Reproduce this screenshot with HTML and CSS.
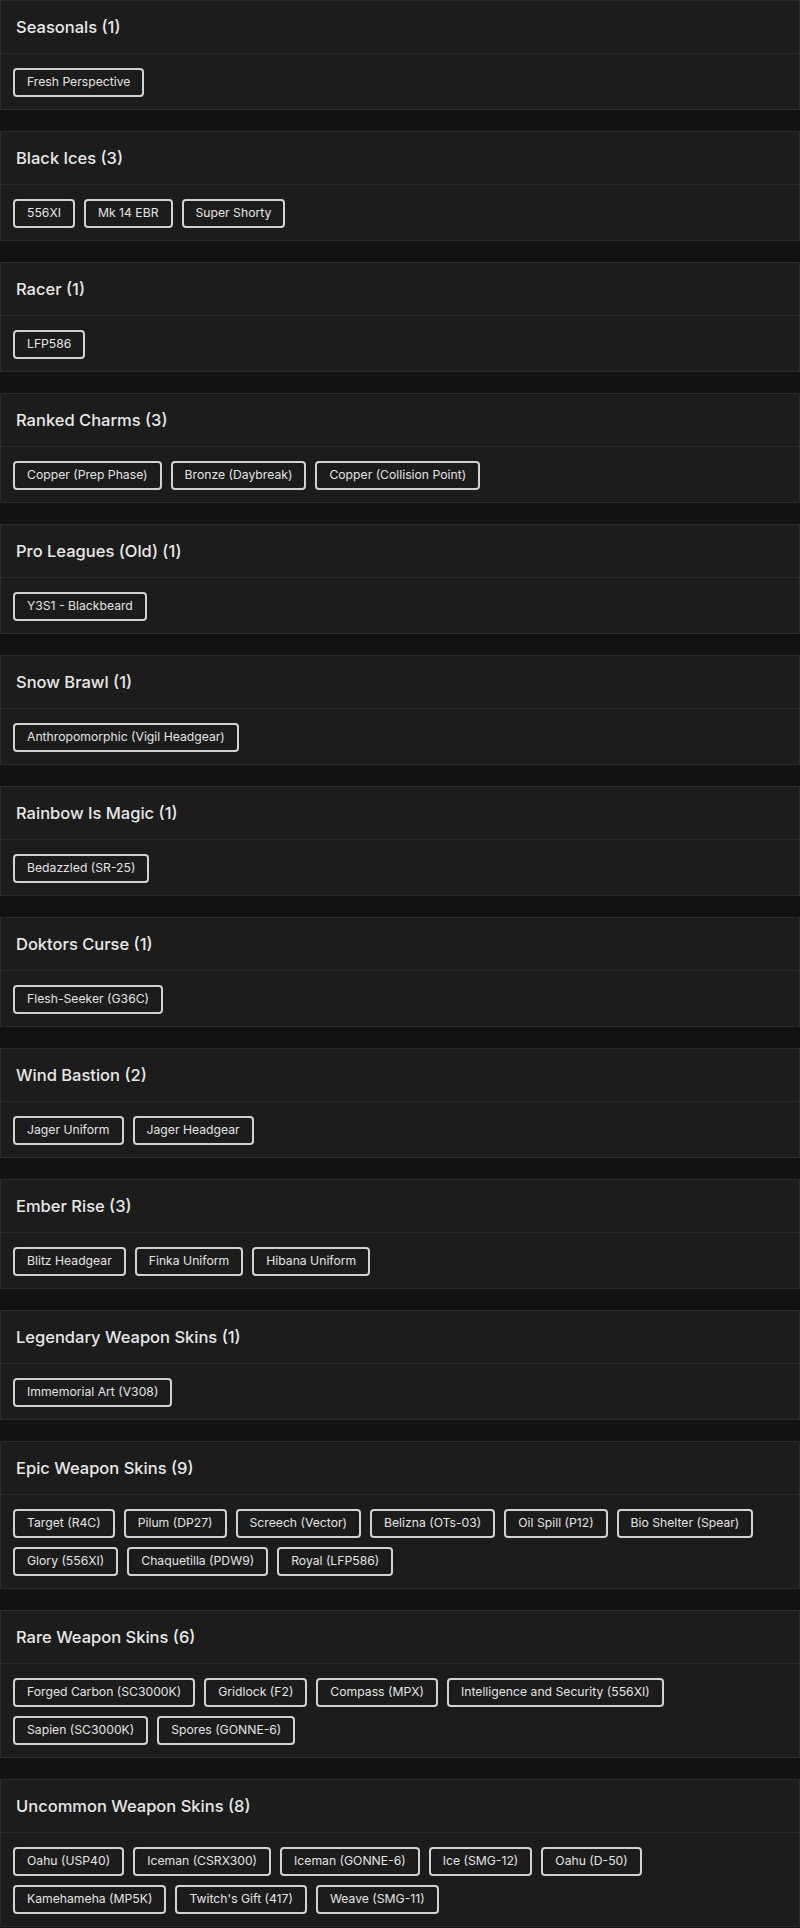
FILE: index.html
```html
<!DOCTYPE html>
<html lang="en">
<head>
<meta charset="utf-8">
<title>Collections</title>
<link rel="stylesheet" href="styles.css">
</head>
<body>
<main class="list">
  <section class="card">
    <div class="card-header"><h3 class="card-title">Seasonals (1)</h3></div>
    <div class="card-body">
      <span class="tag">Fresh Perspective</span>
    </div>
  </section>
  <section class="card">
    <div class="card-header"><h3 class="card-title">Black Ices (3)</h3></div>
    <div class="card-body">
      <span class="tag">556XI</span>
      <span class="tag">Mk 14 EBR</span>
      <span class="tag">Super Shorty</span>
    </div>
  </section>
  <section class="card">
    <div class="card-header"><h3 class="card-title">Racer (1)</h3></div>
    <div class="card-body">
      <span class="tag">LFP586</span>
    </div>
  </section>
  <section class="card">
    <div class="card-header"><h3 class="card-title">Ranked Charms (3)</h3></div>
    <div class="card-body">
      <span class="tag">Copper (Prep Phase)</span>
      <span class="tag">Bronze (Daybreak)</span>
      <span class="tag">Copper (Collision Point)</span>
    </div>
  </section>
  <section class="card">
    <div class="card-header"><h3 class="card-title">Pro Leagues (Old) (1)</h3></div>
    <div class="card-body">
      <span class="tag">Y3S1 - Blackbeard</span>
    </div>
  </section>
  <section class="card">
    <div class="card-header"><h3 class="card-title">Snow Brawl (1)</h3></div>
    <div class="card-body">
      <span class="tag">Anthropomorphic (Vigil Headgear)</span>
    </div>
  </section>
  <section class="card">
    <div class="card-header"><h3 class="card-title">Rainbow Is Magic (1)</h3></div>
    <div class="card-body">
      <span class="tag">Bedazzled (SR-25)</span>
    </div>
  </section>
  <section class="card">
    <div class="card-header"><h3 class="card-title">Doktors Curse (1)</h3></div>
    <div class="card-body">
      <span class="tag">Flesh-Seeker (G36C)</span>
    </div>
  </section>
  <section class="card">
    <div class="card-header"><h3 class="card-title">Wind Bastion (2)</h3></div>
    <div class="card-body">
      <span class="tag">Jager Uniform</span>
      <span class="tag">Jager Headgear</span>
    </div>
  </section>
  <section class="card">
    <div class="card-header"><h3 class="card-title">Ember Rise (3)</h3></div>
    <div class="card-body">
      <span class="tag">Blitz Headgear</span>
      <span class="tag">Finka Uniform</span>
      <span class="tag">Hibana Uniform</span>
    </div>
  </section>
  <section class="card">
    <div class="card-header"><h3 class="card-title">Legendary Weapon Skins (1)</h3></div>
    <div class="card-body">
      <span class="tag">Immemorial Art (V308)</span>
    </div>
  </section>
  <section class="card">
    <div class="card-header"><h3 class="card-title">Epic Weapon Skins (9)</h3></div>
    <div class="card-body">
      <span class="tag">Target (R4C)</span>
      <span class="tag">Pilum (DP27)</span>
      <span class="tag">Screech (Vector)</span>
      <span class="tag">Belizna (OTs-03)</span>
      <span class="tag">Oil Spill (P12)</span>
      <span class="tag">Bio Shelter (Spear)</span>
      <span class="tag">Glory (556XI)</span>
      <span class="tag">Chaquetilla (PDW9)</span>
      <span class="tag">Royal (LFP586)</span>
    </div>
  </section>
  <section class="card">
    <div class="card-header"><h3 class="card-title">Rare Weapon Skins (6)</h3></div>
    <div class="card-body">
      <span class="tag">Forged Carbon (SC3000K)</span>
      <span class="tag">Gridlock (F2)</span>
      <span class="tag">Compass (MPX)</span>
      <span class="tag">Intelligence and Security (556XI)</span>
      <span class="tag">Sapien (SC3000K)</span>
      <span class="tag">Spores (GONNE-6)</span>
    </div>
  </section>
  <section class="card">
    <div class="card-header"><h3 class="card-title">Uncommon Weapon Skins (8)</h3></div>
    <div class="card-body">
      <span class="tag">Oahu (USP40)</span>
      <span class="tag">Iceman (CSRX300)</span>
      <span class="tag">Iceman (GONNE-6)</span>
      <span class="tag">Ice (SMG-12)</span>
      <span class="tag">Oahu (D-50)</span>
      <span class="tag">Kamehameha (MP5K)</span>
      <span class="tag">Twitch's Gift (417)</span>
      <span class="tag">Weave (SMG-11)</span>
    </div>
  </section>
</main>
</body>
</html>
```
FILE: styles.css
```css
html, body {
  margin: 0;
  padding: 0;
  background: #121212;
}

body {
  font-family: Inter, "Liberation Sans", Arial, sans-serif;
  color: #e6e6e6;
}

.list {
  display: flex;
  flex-direction: column;
  gap: 21px;
}

.card {
  background: #1c1c1c;
  border: 1px solid #2b2b2b;
}

.card-header {
  padding: 16px 15px 15px;
  border-bottom: 1px solid #2b2b2b;
}

.card-title {
  margin: 0;
  font-size: 16.5px;
  line-height: 21px;
  font-weight: 500;
  color: #e8e8e8;
}

.card-body {
  display: flex;
  flex-wrap: wrap;
  gap: 9px;
  padding: 14px 12px 12px 12px;
}

.tag {
  display: inline-flex;
  align-items: center;
  height: 29px;
  box-sizing: border-box;
  padding: 0 12px;
  border: 2px solid #d2d2d2;
  border-radius: 4px;
  font-size: 12.2px;
  line-height: 1;
  color: #e4e4e4;
  white-space: nowrap;
}
```
